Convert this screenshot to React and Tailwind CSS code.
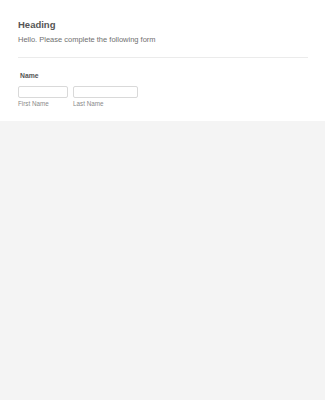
import React from "react";

function SubField({ label, width }) {
  return (
    <div className="flex flex-col">
      <div className={`${width} h-[12px] rounded-[2px] border border-[#d9d9d9] bg-white`} />
      <span className="mt-[2px] text-[6.3px] leading-[8px] text-[#8a8a8a]">{label}</span>
    </div>
  );
}

export default function App() {
  return (
    <div className="min-h-[400px] bg-[#f4f4f4] font-['Liberation_Sans',Arial,sans-serif]">
      <div className="bg-white px-[18px] pt-[19px] pb-[13px]">
        {/* Form header */}
        <h1 className="text-[9.5px] leading-[11px] font-bold text-[#555]">Heading</h1>
        <p className="mt-[5px] text-[7.5px] leading-[9px] text-[#707070]">
          Hello. Please complete the following form
        </p>
        <div className="mt-[13px] w-[290px] border-t border-[#ebebeb]" />

        {/* Name field */}
        <div className="mt-[14px]">
          <label className="block pl-[2px] text-[6.8px] leading-[8px] font-bold text-[#555]">Name</label>
          <div className="mt-[6px] flex gap-[5px]">
            <SubField label="First Name" width="w-[50px]" />
            <SubField label="Last Name" width="w-[65px]" />
          </div>
        </div>
      </div>
    </div>
  );
}
